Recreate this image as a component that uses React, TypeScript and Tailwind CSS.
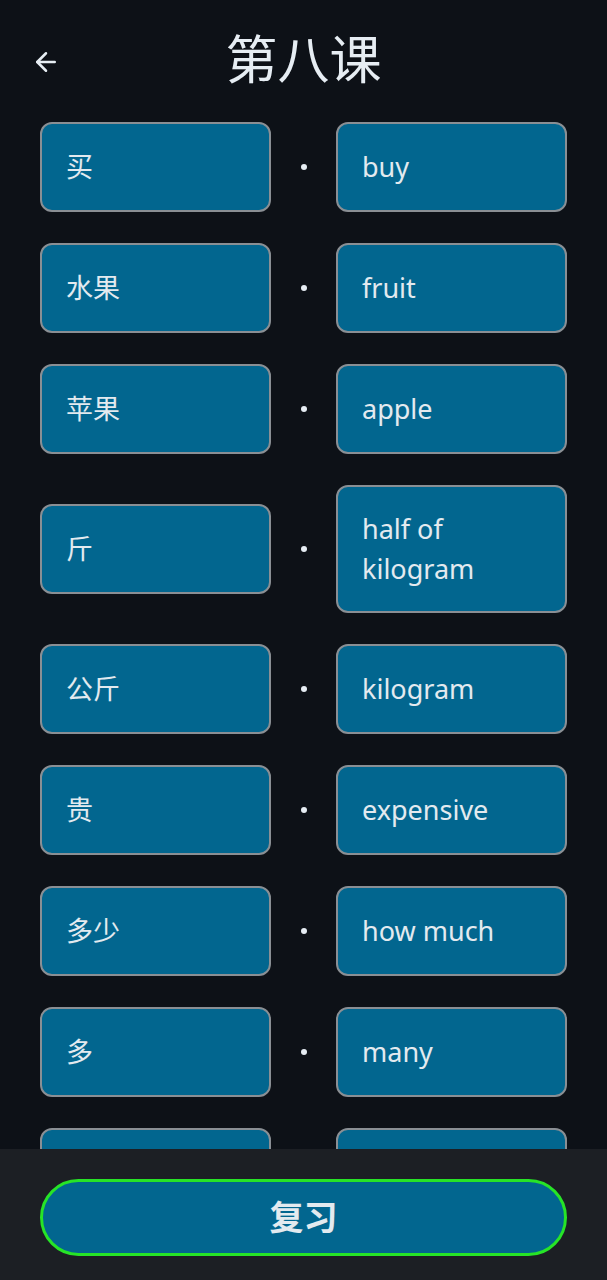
import React from "react";
import { ArrowLeft } from "lucide-react";

const words: [string, string][] = [
  ["买", "buy"],
  ["水果", "fruit"],
  ["苹果", "apple"],
  ["斤", "half of kilogram"],
  ["公斤", "kilogram"],
  ["贵", "expensive"],
  ["多少", "how much"],
  ["多", "many"],
  ["便宜", "cheap"],
];

const card =
  "w-[231px] min-h-[90px] rounded-[12px] border-2 border-[#8a8f94] bg-[#02668f] text-[#e3eaef] text-[27px] leading-[40px] flex items-center pl-[24px] pr-4 py-[22px]";

export default function App() {
  return (
    <div
      className="relative h-[1280px] w-[607px] overflow-hidden bg-[#0d1117]"
      style={{ fontFamily: '"Noto Sans", "Noto Sans CJK SC", sans-serif' }}
    >
      <header className="relative h-[122px] flex items-start justify-center pt-[25px]">
        <button className="absolute left-[31px] top-[47px] text-[#e6edf3]">
          <ArrowLeft size={30} strokeWidth={2} />
        </button>
        <h1 className="text-[52px] leading-[68px] text-[#e6edf3] font-normal">第八课</h1>
      </header>

      <div className="flex flex-col gap-[31px] px-[40px]">
        {words.map(([zh, en]) => (
          <div key={zh} className="flex items-center">
            <div className={card}>{zh}</div>
            <div className="w-[65px] flex justify-center">
              <span className="block w-[6px] h-[6px] rounded-full bg-[#e6edf3]" />
            </div>
            <div className={card}>
              <span className="max-w-[140px]">{en}</span>
            </div>
          </div>
        ))}
      </div>

      <div className="absolute bottom-0 left-0 right-0 h-[131px] bg-[#1c1f24] px-[40px] pt-[30px]">
        <button className="w-full h-[77px] rounded-full border-[3px] border-[#27e427] bg-[#02668f] text-[#e3eaef] text-[34px] font-bold">
          复习
        </button>
      </div>
    </div>
  );
}
